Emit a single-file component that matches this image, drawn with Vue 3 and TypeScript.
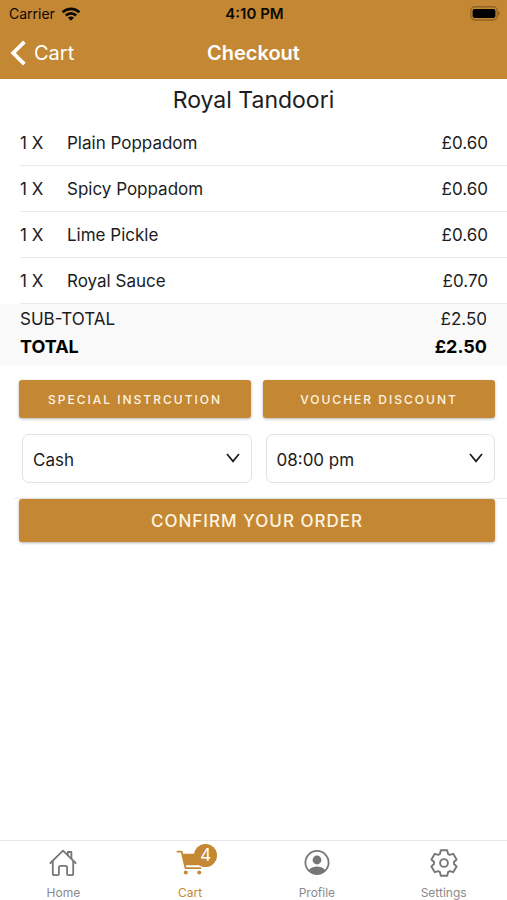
<script setup lang="ts">
import { ref } from 'vue'

interface OrderItem {
  qty: number
  name: string
  price: string
}

const items: OrderItem[] = [
  { qty: 1, name: 'Plain Poppadom', price: '£0.60' },
  { qty: 1, name: 'Spicy Poppadom', price: '£0.60' },
  { qty: 1, name: 'Lime Pickle', price: '£0.60' },
  { qty: 1, name: 'Royal Sauce', price: '£0.70' },
]

const payment = ref('Cash')
const time = ref('08:00 pm')
</script>

<template>
  <div class="page">
    <header class="top">
      <div class="status">
        <span class="carrier">
          Carrier
          <svg width="20" height="14" viewBox="0 0 20 14" aria-hidden="true">
            <g fill="none" stroke="#0c0904" stroke-width="2.6">
              <path d="M1.6 5.3a12 12 0 0 1 16.8 0" />
              <path d="M4.8 8.5a7.4 7.4 0 0 1 10.4 0" />
            </g>
            <path d="M7 10.7a4.2 4.2 0 0 1 6 0L10 13.7Z" fill="#0c0904" />
          </svg>
        </span>
        <span class="clock">4:10 PM</span>
        <svg class="battery" width="31" height="15" viewBox="0 0 31 15" aria-hidden="true">
          <rect x="1.8" y="0.8" width="26.4" height="13.2" rx="4" fill="none" stroke="#906427" stroke-width="1.4" />
          <rect x="3.6" y="2.9" width="22.8" height="9" rx="2" fill="#000" />
          <path d="M29.2 5.2q1.8.7 1.8 2.3t-1.8 2.3Z" fill="#906427" />
        </svg>
      </div>
      <nav class="bar">
        <a class="back" href="#cart">
          <svg width="17" height="28" viewBox="0 0 17 28" aria-hidden="true">
            <path d="M15.4 2.8 4.2 14l11.2 11.2" fill="none" stroke="#fff" stroke-width="3.8" />
          </svg>
          Cart
        </a>
        <h1>Checkout</h1>
      </nav>
    </header>

    <main>
      <h2>Royal Tandoori</h2>
      <ul class="items">
        <li v-for="item in items" :key="item.name">
          <span class="qty">{{ item.qty }} X</span>
          <span class="name">{{ item.name }}</span>
          <span>{{ item.price }}</span>
        </li>
      </ul>
      <dl class="totals">
        <div><dt>SUB-TOTAL</dt><dd>£2.50</dd></div>
        <div class="grand"><dt>TOTAL</dt><dd>£2.50</dd></div>
      </dl>

      <div class="actions">
        <button type="button">SPECIAL INSTRCUTION</button>
        <button type="button">VOUCHER DISCOUNT</button>
      </div>
      <div class="choices">
        <div class="field">
          <select v-model="payment" aria-label="Payment method">
            <option>Cash</option>
          </select>
          <svg width="16" height="12" viewBox="0 0 16 12" aria-hidden="true">
            <path d="m2 2 6 7.4L14 2" />
          </svg>
        </div>
        <div class="field">
          <select v-model="time" aria-label="Collection time">
            <option>08:00 pm</option>
          </select>
          <svg width="16" height="12" viewBox="0 0 16 12" aria-hidden="true">
            <path d="m2 2 6 7.4L14 2" />
          </svg>
        </div>
      </div>
      <div class="confirm">
        <button type="button">CONFIRM YOUR ORDER</button>
      </div>
    </main>

    <nav class="tabs">
      <a href="#home">
        <svg width="28" height="28" viewBox="0 0 28 28" aria-hidden="true">
          <g fill="none" stroke="#777" stroke-width="1.8" stroke-linejoin="round" stroke-linecap="round">
            <path d="M1.4 14 14 1.6 26.6 14" />
            <path d="M18.8 6V3h3.6v6.4" />
            <path d="M3.8 12.2v12.3q0 1.7 1.7 1.7h3.2q1.2 0 1.2-1.2v-6.6q0-1.6 1.6-1.6h5q1.6 0 1.6 1.6V25q0 1.2 1.2 1.2h3.2q1.7 0 1.7-1.7V12.2" />
          </g>
        </svg>
        Home
      </a>
      <a href="#cart" class="active">
        <span class="cart">
          <svg width="28" height="28" viewBox="0 0 28 28" aria-hidden="true">
            <path d="M1.4 2.6h4.2l4 16.6h14.8" fill="none" stroke="#c48834" stroke-width="1.8" stroke-linejoin="round" stroke-linecap="round" />
            <path d="M6.2 4.8H27l-2.2 11.4H9Z" fill="#c48834" />
            <circle cx="9.8" cy="23.4" r="2" fill="#c48834" />
            <circle cx="23.2" cy="23.4" r="2" fill="#c48834" />
          </svg>
          <span class="badge">4</span>
        </span>
        Cart
      </a>
      <a href="#profile">
        <svg width="28" height="28" viewBox="0 0 28 28" aria-hidden="true">
          <defs>
            <clipPath id="face"><circle cx="14" cy="13.5" r="11.6" /></clipPath>
          </defs>
          <circle cx="14" cy="13.5" r="11.6" fill="none" stroke="#777" stroke-width="1.8" />
          <circle cx="14" cy="11" r="4.4" fill="#777" />
          <ellipse cx="14" cy="23.4" rx="9" ry="6" fill="#777" clip-path="url(#face)" />
        </svg>
        Profile
      </a>
      <a href="#settings">
        <svg width="28" height="28" viewBox="-14 -14 28 28" aria-hidden="true">
          <g fill="none" stroke="#777" stroke-width="1.9" stroke-linejoin="round">
            <path d="M-3.2-12.7H3.2L4-9.2 5.8-8.2 9.2-9.2 12.6-3.5 10-1V1L12.6 3.5 9.2 9.2 5.8 8.2 4 9.2 3.2 12.7H-3.2L-4 9.2-5.8 8.2-9.2 9.2-12.6 3.5-10 1V-1L-12.6-3.5-9.2-9.2-5.8-8.2-4-9.2Z" />
            <circle r="3.9" />
          </g>
        </svg>
        Settings
      </a>
    </nav>
  </div>
</template>

<style>
body {
  margin: 0;
  background: #fff;
}
</style>

<style scoped>
.page {
  min-height: 100vh;
  display: flex;
  flex-direction: column;
  font-family: Inter, "Liberation Sans", sans-serif;
  font-size: 17px;
  color: #1c1c1e;
}
.top {
  background: #c48834;
}
.status {
  display: grid;
  grid-template-columns: 1fr auto 1fr;
  align-items: center;
  height: 27px;
  padding: 0 7px 0 9px;
  font-size: 14px;
  color: #0c0904;
}
.carrier {
  display: flex;
  align-items: center;
  gap: 6px;
}
.clock {
  font-size: 15px;
  font-weight: 600;
}
.battery {
  justify-self: end;
}
.bar {
  display: grid;
  grid-template-columns: 1fr auto 1fr;
  align-items: center;
  height: 52px;
  padding: 0 9px;
  color: #fff;
}
.back {
  display: flex;
  align-items: center;
  gap: 8px;
  color: #fff;
  font-size: 20px;
  text-decoration: none;
}
h1 {
  margin: 0;
  font-size: 20px;
  font-weight: 600;
}
main {
  flex: 1;
}
h2 {
  margin: 0;
  height: 41px;
  line-height: 43px;
  text-align: center;
  font-size: 23px;
  font-weight: 400;
}
.items {
  list-style: none;
  margin: 0;
  padding: 0 0 0 20px;
}
.items li {
  display: flex;
  align-items: center;
  height: 45px;
  padding-right: 19px;
  border-bottom: 1px solid #e9e9e9;
}
.qty {
  width: 47px;
}
.name {
  flex: 1;
}
.totals {
  margin: 0;
  padding: 2px 20px 4px;
  background: #f9f9f9;
}
.totals div {
  display: flex;
  justify-content: space-between;
  line-height: 27px;
}
.totals dd {
  margin: 0;
}
.totals .grand {
  font-size: 18px;
  line-height: 28px;
  font-weight: 700;
  color: #000;
}
.actions,
.choices {
  display: grid;
  grid-template-columns: 1fr 1fr;
  gap: 12px;
  padding: 15px 12px 0 19px;
}
.choices {
  gap: 14px;
  padding: 16px 12px 15px 22px;
}
button {
  height: 38px;
  padding: 0;
  border: 0;
  border-radius: 3px;
  background: #c48834;
  box-shadow: 0 1px 3px rgba(0, 0, 0, 0.3);
  color: #fff4e2;
  font-family: inherit;
  font-size: 12px;
  font-weight: 500;
  letter-spacing: 2px;
}
.field {
  display: grid;
  align-items: center;
}
.field > * {
  grid-area: 1 / 1;
}
.field svg {
  justify-self: end;
  margin: 0 11px 2px 0;
  pointer-events: none;
  fill: none;
  stroke: #1c1c1e;
  stroke-width: 1.7;
}
select {
  appearance: none;
  width: 100%;
  height: 49px;
  padding: 3px 36px 0 10px;
  border: 1px solid #e2e2e2;
  border-radius: 7px;
  background: #fff;
  color: #1c1c1e;
  font-family: inherit;
  font-size: 17px;
}
.confirm {
  display: grid;
  margin-left: 14px;
  padding: 0 12px 0 5px;
  border-top: 1px solid #e9e9e9;
}
.confirm button {
  height: 43px;
  font-size: 17px;
  letter-spacing: 1px;
}
.tabs {
  display: grid;
  grid-template-columns: repeat(4, 1fr);
  height: 59px;
  border-top: 1px solid #e6e6e6;
}
.tabs a {
  display: flex;
  flex-direction: column;
  align-items: center;
  gap: 8px;
  padding-top: 8px;
  color: #8a8a8a;
  font-size: 12px;
  line-height: 15px;
  text-decoration: none;
}
.tabs .active {
  color: #c48834;
}
.tabs svg {
  display: block;
}
.cart {
  position: relative;
}
.badge {
  position: absolute;
  left: 18px;
  top: -5px;
  width: 23px;
  height: 23px;
  border-radius: 50%;
  background: #c48834;
  color: #fff;
  font-size: 17px;
  line-height: 23px;
  text-align: center;
}
</style>
